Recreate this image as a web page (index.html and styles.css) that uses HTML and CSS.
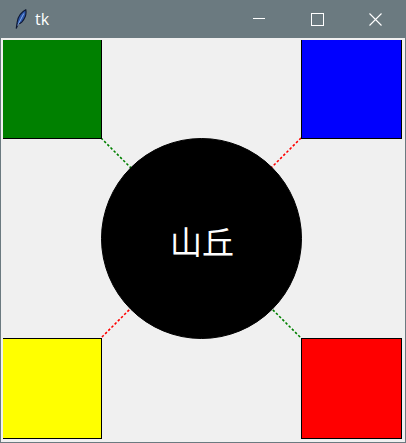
FILE: index.html
```html
<!DOCTYPE html>
<html>
<head>
<meta charset="utf-8">
<link rel="stylesheet" href="styles.css">
</head>
<body>
<div class="window">
  <div class="titlebar">
    <svg class="app-icon" width="12" height="20" viewBox="0 0 12 20">
      <path d="M1.2 19.5 L2.2 13 C3 8 5.5 3.5 10.8 0.8 C11.5 4.5 10 9.5 7 12.8 C5.8 14 4.6 14.6 3.2 15 Z" fill="#2b56a8" stroke="#0d1630" stroke-width="1.1"/>
      <path d="M2.6 16.5 L8.8 4.5" stroke="#8fb4ee" stroke-width="0.9"/>
    </svg>
    <span class="title">tk</span>
    <div class="controls">
      <div class="ctl">
        <svg width="12" height="12" viewBox="0 0 12 12"><line x1="0" y1="5.5" x2="12" y2="5.5" stroke="#fff" stroke-width="1"/></svg>
      </div>
      <div class="ctl">
        <svg width="13" height="13" viewBox="0 0 13 13"><rect x="0.5" y="0.5" width="12" height="12" fill="none" stroke="#fff" stroke-width="1"/></svg>
      </div>
      <div class="ctl">
        <svg width="13" height="13" viewBox="0 0 13 13"><path d="M0.5 0.5 L12.5 12.5 M12.5 0.5 L0.5 12.5" stroke="#fff" stroke-width="1.1"/></svg>
      </div>
    </div>
  </div>
  <svg class="canvas" width="404" height="404" viewBox="0 0 404 404">
    <rect x="0" y="0" width="404" height="404" fill="#f0f0f0"/>
    <line x1="100" y1="100" x2="300" y2="300" stroke="#008000" stroke-width="1.6" stroke-dasharray="2.5 2"/>
    <line x1="300" y1="100" x2="100" y2="300" stroke="#ff0000" stroke-width="1.6" stroke-dasharray="2.5 2"/>
    <rect x="0.5" y="0.5" width="100" height="100" fill="#008000" stroke="#000"/>
    <rect x="300.5" y="0.5" width="100" height="100" fill="#0000ff" stroke="#000"/>
    <rect x="0.5" y="300.5" width="100" height="100" fill="#ffff00" stroke="#000"/>
    <rect x="300.5" y="300.5" width="100" height="100" fill="#ff0000" stroke="#000"/>
    <circle cx="200.5" cy="200.5" r="100" fill="#000" stroke="#000"/>
    <text class="label" x="201" y="202" text-anchor="middle" dominant-baseline="central">山丘</text>
    <rect x="1" y="1" width="402" height="402" fill="none" stroke="#f0f0f0" stroke-width="2"/>
  </svg>
</div>
</body>
</html>
```
FILE: styles.css
```css
html, body {
  margin: 0;
  padding: 0;
  background: #6b7a80;
}
.window {
  width: 404px;
  height: 442px;
  border: 1px solid #6b7a80;
  border-top: none;
  display: flex;
  flex-direction: column;
  background: #6b7a80;
}
.titlebar {
  height: 38px;
  display: flex;
  align-items: center;
  background: #6b7a80;
  color: #fff;
  font-family: "Open Sans", "Noto Sans", sans-serif;
  font-size: 16px;
}
.app-icon {
  margin-left: 14px;
}
.title {
  margin-left: 8px;
  margin-top: -1px;
}
.controls {
  margin-left: auto;
  margin-right: 1px;
  display: flex;
  height: 100%;
}
.ctl {
  width: 58px;
  height: 100%;
  display: flex;
  align-items: center;
  justify-content: center;
}
.canvas {
  display: block;
}
.label {
  fill: #fff;
  font-family: "Noto Sans CJK SC", "Noto Sans CJK JP", sans-serif;
  font-size: 32px;
}
```
